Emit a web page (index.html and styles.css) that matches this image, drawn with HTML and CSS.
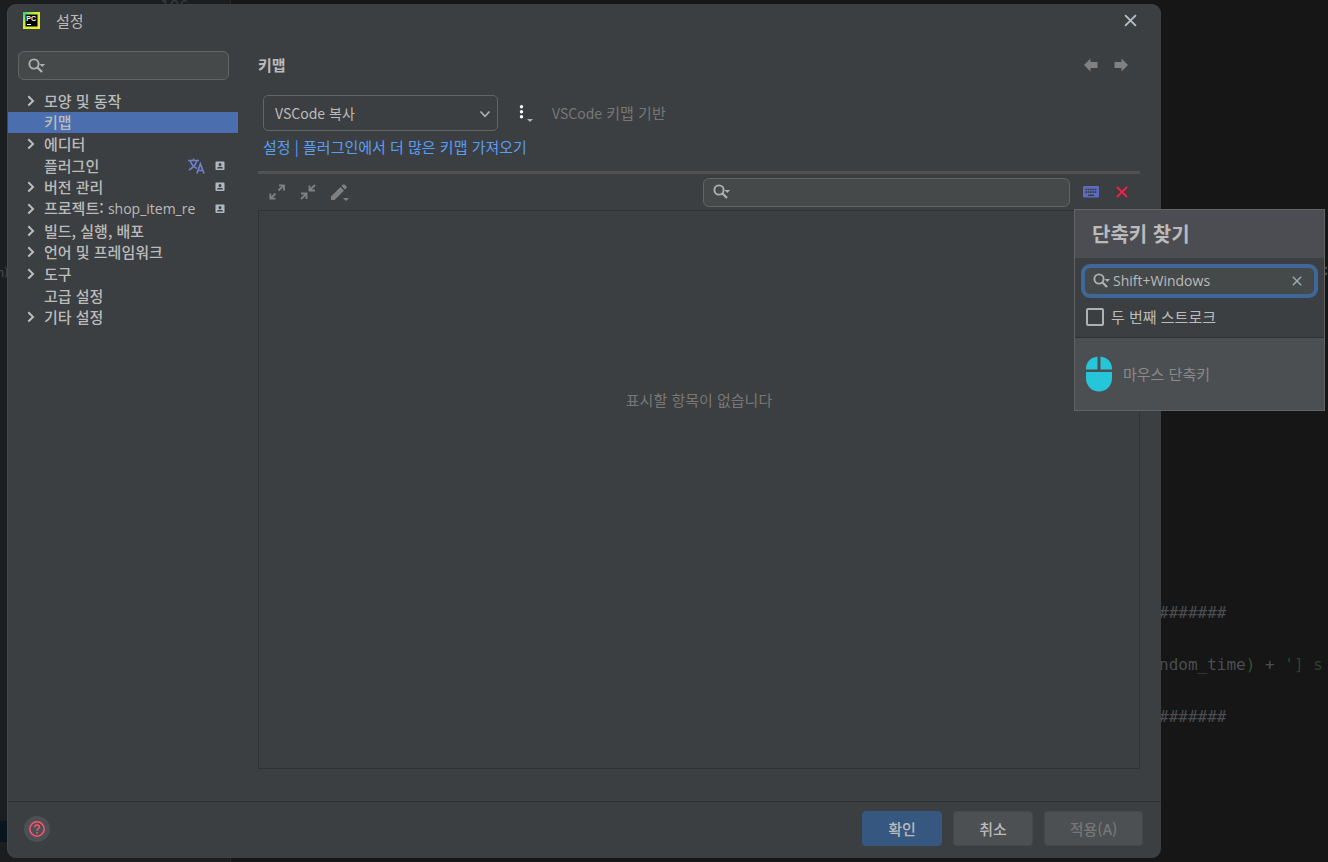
FILE: index.html
```html
<!DOCTYPE html>
<html lang="ko">
<head>
<meta charset="utf-8">
<title>설정</title>
<link rel="stylesheet" href="styles.css">
</head>
<body>
<svg class="defs" aria-hidden="true">
  <symbol id="search" viewBox="0 0 18 16"><circle cx="6" cy="6" r="4.600" fill="none" stroke="currentColor" stroke-width="1.900"/><path d="M9 9l5 5" stroke="currentColor" stroke-width="2.300"/><path d="M11.500 6H17l-2.700 3z" fill="currentColor"/></symbol>
  <symbol id="chevron" viewBox="0 0 8 12"><path d="M1.300 1.200L6 5.900l-4.700 4.600" fill="none" stroke="currentColor" stroke-width="2"/></symbol>
  <symbol id="badge" viewBox="0 0 10 10"><path fill-rule="evenodd" fill="currentColor" d="M1.300.5h7.400q.8 0 .8.8v7q0 .8-.8.8H1.300q-.8 0-.8-.8v-7q0-.8.8-.8zM5 2a1.500 1.500 0 1 0 0 3 1.500 1.500 0 0 0 0-3zM2 7.600h6V7Q7.500 5.700 5 5.700T2 7z"/></symbol>
  <symbol id="cross" viewBox="0 0 12 12"><path d="M1 1l10 10M11 1L1 11" stroke="currentColor" stroke-width="1.800"/></symbol>
</svg>

<div class="editor" aria-hidden="true">
  <div class="gutter"><span class="line-no">196</span><span class="fragment">n)</span><span class="caret-line"></span></div>
  <div class="code"><span class="mark">:</span><pre class="lines">#######

ndom_time<b>)</b> + <i>'] s</i>

#######</pre></div>
</div>

<main class="dialog">
  <header class="titlebar">
    <svg class="logo" viewBox="0 0 17 17"><defs><linearGradient id="lg" x1="0" y1="0" x2="1" y2="1"><stop offset="0" stop-color="#18d68b"/><stop offset=".35" stop-color="#c5ee35"/><stop offset="1" stop-color="#f4ed32"/></linearGradient></defs><path fill="url(#lg)" d="M0 0h17v17H0z"/><path d="M2.500 2.500h12v12h-12z"/><text x="3.300" y="8.700" class="logo-text">PC</text><path fill="#fff" d="M4 12h4v1H4z"/></svg>
    <span class="title">설정</span>
    <button class="icon-btn close" aria-label="닫기"><svg width="13" height="13"><use href="#cross"/></svg></button>
  </header>

  <div class="content">
    <aside class="sidebar">
      <label class="search"><svg width="18" height="16"><use href="#search"/></svg><input type="text" aria-label="설정 검색"></label>
      <nav class="tree">
        <a href="#"><svg class="arrow"><use href="#chevron"/></svg><span>모양 및 동작</span></a>
        <a href="#" class="selected"><svg class="arrow"></svg><span>키맵</span></a>
        <a href="#"><svg class="arrow"><use href="#chevron"/></svg><span>에디터</span></a>
        <a href="#"><svg class="arrow"></svg><span>플러그인</span><svg class="translate" viewBox="0 0 17 16"><path d="M0 2.500h11M5.500.5v2M2.300 3Q4 8 9 10.500M8.800 3Q7.500 8 1 12" fill="none" stroke="currentColor" stroke-width="1.600"/><path d="M8.800 15.500l3.600-9.500 3.600 9.500M10.100 12.500h4.700" fill="none" stroke="currentColor" stroke-width="1.700"/></svg><svg class="badge"><use href="#badge"/></svg></a>
        <a href="#"><svg class="arrow"><use href="#chevron"/></svg><span>버전 관리</span><svg class="badge"><use href="#badge"/></svg></a>
        <a href="#"><svg class="arrow"><use href="#chevron"/></svg><span class="name">프로젝트: <span class="latin">shop_item_re</span></span><svg class="badge"><use href="#badge"/></svg></a>
        <a href="#"><svg class="arrow"><use href="#chevron"/></svg><span>빌드, 실행, 배포</span></a>
        <a href="#"><svg class="arrow"><use href="#chevron"/></svg><span>언어 및 프레임워크</span></a>
        <a href="#"><svg class="arrow"><use href="#chevron"/></svg><span>도구</span></a>
        <a href="#"><svg class="arrow"></svg><span>고급 설정</span></a>
        <a href="#"><svg class="arrow"><use href="#chevron"/></svg><span>기타 설정</span></a>
      </nav>
    </aside>

    <section class="panel">
      <div class="heading">
        <h1>키맵</h1>
        <button class="icon-btn" aria-label="뒤로"><svg width="14" height="14" viewBox="0 0 14 14"><path fill="currentColor" d="M0 7l6.500-6.500V4H13.500v6H6.500v3.500z"/></svg></button>
        <button class="icon-btn" aria-label="앞으로"><svg width="14" height="14" viewBox="0 0 14 14"><path fill="currentColor" d="M14 7L7.500.5V4H.5v6h7v3.500z"/></svg></button>
      </div>
      <div class="scheme">
        <div class="combo"><select aria-label="키맵 선택"><option>VSCode 복사</option></select><svg viewBox="0 0 12 8"><path d="M1.500 1.500L6 6.300l4.500-4.800" fill="none" stroke="currentColor" stroke-width="1.600"/></svg></div>
        <button class="icon-btn more" aria-label="작업"><svg width="16" height="18" viewBox="0 0 16 18"><g fill="#fff"><circle cx="4.500" cy="2.800" r="1.700"/><circle cx="4.500" cy="7.800" r="1.700"/><circle cx="4.500" cy="12.800" r="1.700"/></g><path fill="#afb1b3" d="M10 15h6l-3 3z"/></svg></button>
        <span class="muted"><span class="small">VSCode</span> 키맵 기반</span>
      </div>
      <a href="#" class="import">설정 | 플러그인에서 더 많은 키맵 가져오기</a>
      <div class="toolbar">
        <button class="icon-btn" aria-label="모두 펼치기"><svg width="16" height="16" viewBox="0 0 16 16"><path d="M9.500 6.500L14 2M10 1.300h5V6.500M6.500 9.500L2 14M1.300 9.500v5.200H6.500" fill="none" stroke="currentColor" stroke-width="1.800"/></svg></button>
        <button class="icon-btn" aria-label="모두 접기"><svg width="16" height="16" viewBox="0 0 16 16"><path d="M15 1l-5 5M9.500 1.500v5H15M1 15l5-5M1 9.500h5.500V15" fill="none" stroke="currentColor" stroke-width="1.800"/></svg></button>
        <button class="icon-btn" aria-label="단축키 편집"><svg width="18" height="17" viewBox="0 0 18 17"><path fill="currentColor" d="M0 12.500L9.500 3l3.500 3.500L3.500 16H0zM10.500 2l1.300-1.300q1-.9 2 0l1.500 1.500q.9 1 0 2L14 5.500zM12 14h6l-3 3z"/></svg></button>
        <label class="search"><svg width="18" height="16"><use href="#search"/></svg><input type="text" aria-label="작업 검색"></label>
        <button class="icon-btn keys" aria-label="단축키로 찾기"><svg width="16" height="12" viewBox="0 0 16 12"><rect width="16" height="11.500" rx="1" fill="#5c6bc0"/><path d="M2.500 3.500h11M2.500 6.200h11" stroke="#3c3f41" stroke-width="1.700" stroke-dasharray="1.700 .6"/><path d="M5 9.300h6" stroke="#3c3f41" stroke-width="1.500"/></svg></button>
        <button class="icon-btn clear" aria-label="필터 지우기"><svg width="12" height="12"><use href="#cross"/></svg></button>
      </div>
      <div class="results"><p>표시할 항목이 없습니다</p></div>
    </section>
  </div>

  <footer class="actions">
    <button class="help" aria-label="도움말"><svg width="16" height="16" viewBox="0 0 16 16"><circle cx="8" cy="8" r="7.200" fill="none" stroke="currentColor" stroke-width="1.500"/><path d="M5.600 6.300q0-2.400 2.400-2.400t2.400 2.200c0 1.600-2.400 1.700-2.400 3.600" fill="none" stroke="currentColor" stroke-width="1.500"/><path d="M7.200 11h1.600v1.600H7.200z" fill="currentColor"/></svg></button>
    <button class="btn primary">확인</button>
    <button class="btn">취소</button>
    <button class="btn wide" disabled>적용(A)</button>
  </footer>
</main>

<section class="popup" aria-label="단축키 찾기">
  <h2>단축키 찾기</h2>
  <div class="popup-body">
    <label class="search focused"><svg width="18" height="16"><use href="#search"/></svg><input class="latin" type="text" aria-label="단축키" value="Shift+Windows"><svg class="wipe" width="10" height="10" viewBox="0 0 12 12"><use href="#cross"/></svg></label>
    <label class="check"><input type="checkbox"><span>두 번째 스트로크</span></label>
  </div>
  <div class="mouse"><svg width="26" height="36" viewBox="0 0 26 36"><path fill="#26c6da" d="M11.500.5v13H0Q0 2.500 11.500.5zM14.500.5Q26 2.500 26 13.500H14.500zM0 16h26v6.500a13 13 0 0 1-26 0z"/></svg><span>마우스 단축키</span></div>
</section>
</body>
</html>
```

FILE: styles.css
```css
* { box-sizing: border-box; }

body {
  margin: 0;
  min-height: 100vh;
  padding: 4px 167px 4px 7px;
  display: flex;
  position: relative;
  overflow: hidden;
  background: #161616;
  color: #bbbbbb;
  font: 15px/20px "Noto Sans CJK KR", sans-serif;
}

button, input, select { font: inherit; color: inherit; }
a { color: inherit; text-decoration: none; }
svg { flex: none; display: block; }
.defs { position: absolute; width: 0; height: 0; }

/* Editor behind the dialog */
.editor {
  position: absolute;
  inset: 0;
  display: flex;
  font: 16px/26px "DejaVu Sans Mono", monospace;
  color: #4a4d52;
}
.gutter { position: relative; width: 231px; background: #1c1d1f; border-right: 1px solid #29292a; }
.line-no { position: absolute; left: 160px; top: -6px; color: #37393b; }
.fragment { position: absolute; left: -3px; top: 259px; font: 12px/26px "Noto Sans CJK KR", sans-serif; }
.caret-line { position: absolute; left: 0; top: 821px; width: 100%; height: 21px; background: #08151f; }
.code { position: relative; flex: 1; }
.mark { position: absolute; right: -3px; top: 257px; }
.lines { position: absolute; right: 0; top: 600px; width: 169px; margin: 0; font: inherit; }
.lines b { font-weight: normal; color: #2d5331; }
.lines i { font-style: normal; color: #2f402c; }

/* Dialog */
.dialog {
  position: relative;
  flex: 1;
  min-width: 0;
  display: flex;
  flex-direction: column;
  background: #3c3f41;
  border-left: 1px solid #45484a;
  border-radius: 9px;
}
.titlebar { display: flex; align-items: center; height: 34px; padding: 0 24px 1px 15px; }
.logo { width: 17px; height: 17px; }
.logo-text { font: bold 7px "Liberation Sans", sans-serif; fill: #fff; }
.title { margin-left: 16px; }
.icon-btn { display: grid; place-items: center; padding: 0; border: 0; background: none; color: #808080; }
.close { margin-left: auto; color: #b4bec4; }

.content { flex: 1; display: flex; }
.sidebar { width: 230px; padding-top: 13px; }
.sidebar .search { margin: 0 9px 0 10px; }

.search {
  display: flex;
  align-items: center;
  height: 29px;
  padding: 0 9px;
  background: #45494a;
  border: 1px solid #646464;
  border-radius: 6px;
  color: #afb1b3;
}
.search input { flex: 1; min-width: 0; padding: 0; border: 0; outline: 0; background: none; color: #bbbbbb; }

.tree {
  display: grid;
  grid-auto-rows: 1fr;
  min-height: 238px;
  margin-top: 10px;
  font-weight: 500;
}
.tree a { display: flex; align-items: center; padding: 0 13px 0 19px; }
.tree .selected { background: #4b6eaf; }
.arrow { width: 8px; height: 12px; margin-right: 9px; color: #bdbdbd; }
.name { white-space: nowrap; }
.latin, .search input.latin { font-family: "Open Sans", "Noto Sans CJK KR", sans-serif; font-size: 14px; }
.small { font-size: 14px; }
.badge { width: 10px; height: 10px; margin-left: auto; color: #afb9c0; }
.translate { width: 17px; height: 16px; margin-left: auto; color: #6f7fc8; }
.translate + .badge { margin-left: 10px; }

.panel { flex: 1; min-width: 0; display: flex; flex-direction: column; padding: 13px 21px 32px 20px; }
.heading { display: flex; align-items: center; gap: 16px; height: 28px; padding-right: 12px; }
.heading h1 { margin: 0 auto 0 0; font-size: 15px; font-weight: 700; }
.scheme { display: flex; align-items: center; margin: 16px 0 0 5px; }
.combo { position: relative; width: 235px; color: #afb1b3; }
.combo select {
  appearance: none;
  display: block;
  width: 100%;
  height: 36px;
  padding: 0 30px 0 11px;
  background: #3c3f41;
  border: 1px solid #646464;
  border-radius: 5px;
  color: #bbbbbb;
  font-size: 14px;
}
.combo svg { position: absolute; right: 7px; top: 15px; width: 12px; height: 8px; pointer-events: none; }
.more { margin: 0 19px; }
.muted { color: #777777; }
.import { align-self: flex-start; margin: 6px 0 14px 5px; color: #589df6; }

.toolbar {
  display: flex;
  align-items: center;
  gap: 15px;
  height: 39px;
  padding: 0 12px 0 11px;
  border-top: 3px solid #515151;
}
.toolbar .search { width: 367px; margin: 0 -2px 0 auto; }
.toolbar .keys { margin-right: 2px; }
.toolbar .clear { color: #f2204b; }
.results { flex: 1; padding-top: 179px; border: 1px solid #323232; text-align: center; color: #777777; }
.results p { margin: 0; }

.actions {
  display: flex;
  align-items: center;
  gap: 11px;
  padding: 9px 18px 12px 16px;
  border-top: 1px solid #323232;
}
.help { display: grid; place-items: center; width: 26px; height: 26px; margin-right: auto; padding: 0; border: 0; border-radius: 50%; background: #4c5052; color: #ff5370; }
.btn { width: 80px; height: 35px; padding: 0; border: 1px solid #46494b; border-radius: 4px; background: #4c5052; font-weight: 500; }
.btn.primary { background: #365880; border-color: #365880; }
.btn.wide { width: 99px; }
.btn:disabled { color: #777777; }

/* Shortcut search popup */
.popup {
  position: absolute;
  top: 209px;
  right: 3px;
  width: 251px;
  background: #3c3f41;
  border: 1px solid #616365;
}
.popup h2 { margin: 0; padding: 0 17px; background: #4b4d52; font-size: 20px; line-height: 48px; font-weight: 700; }
.popup-body { padding: 6px 6px 10px; }
.focused { height: 34px; padding: 0 12px 0 8px; border: 4px solid #3f6799; border-radius: 9px; }
.focused svg { margin-right: 2px; }
.focused .wipe { margin-right: 0; color: #9aa7b0; }
.check { display: flex; align-items: center; gap: 7px; margin: 9px 0 0 5px; }
.check input { appearance: none; width: 18px; height: 18px; margin: 0; border: 2px solid #afb1b3; border-radius: 2px; }
.mouse { display: flex; align-items: center; gap: 11px; height: 73px; padding-left: 11px; background: #4c4f51; border-top: 1px solid #323232; color: #8a8a8a; }
```
